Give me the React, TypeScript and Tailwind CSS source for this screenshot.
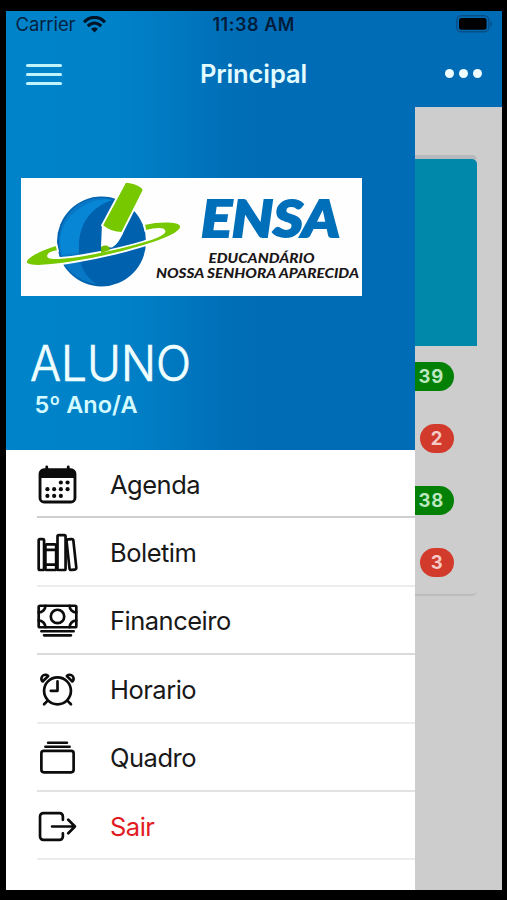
import type { IconType } from 'react-icons';
import { IoAlarmOutline, IoAlbumsOutline, IoCashOutline, IoExitOutline, IoLibraryOutline } from 'react-icons/io5';

const calendarDots = [
  [296, 232],
  [376, 232],
  [136, 312],
  [216, 312],
  [296, 312],
  [376, 312],
  [136, 392],
  [216, 392],
  [296, 392],
];

function CalendarIcon({ className }: { className?: string }) {
  return (
    <svg className={className} viewBox="0 0 512 512">
      <g fill="none" stroke="currentColor" strokeWidth="34">
        <rect x="48" y="80" width="416" height="384" rx="48" />
        <path d="M128 48v32M384 48v32" strokeLinecap="round" />
      </g>
      <path d="M48 178v-50a48 48 0 0148-48h320a48 48 0 0148 48v50z" fill="currentColor" />
      {calendarDots.map(([cx, cy]) => (
        <circle key={`${cx}-${cy}`} cx={cx} cy={cy} r="25" fill="currentColor" />
      ))}
    </svg>
  );
}

const menuItems: { label: string; icon: IconType | typeof CalendarIcon; line: string; danger?: boolean }[] = [
  { label: 'Agenda', icon: CalendarIcon, line: 'border-[#cfcfcf]' },
  { label: 'Boletim', icon: IoLibraryOutline, line: 'border-[#ececec]' },
  { label: 'Financeiro', icon: IoCashOutline, line: 'border-[#dadada]' },
  { label: 'Horario', icon: IoAlarmOutline, line: 'border-[#ececec]' },
  { label: 'Quadro', icon: IoAlbumsOutline, line: 'border-[#e2e2e2]' },
  { label: 'Sair', icon: IoExitOutline, line: 'border-[#ececec]', danger: true },
];

const badges = [
  { value: '39', good: true },
  { value: '2', good: false },
  { value: '38', good: true },
  { value: '3', good: false },
];

const gradient =
  'bg-[linear-gradient(90deg,#0083c9_0px,#0082c8_110px,#0079c1_165px,#006fb8_220px,#006cb6_260px)]';

function StatusBar() {
  return (
    <div className="grid h-[28px] grid-cols-3 items-center px-[10px] text-[#04213f]">
      <div className="flex items-center gap-[8px]">
        <span className="text-[18.5px] tracking-[-0.1px]">Carrier</span>
        <svg className="-mt-[1px]" width="23" height="17" viewBox="0 0 23 17" fill="none" stroke="#001226" strokeWidth="3.2">
          <path d="M1 6.2C7-.1 16-.1 22 6.2" />
          <path d="M4.8 10.2C9 6 14 6 18.2 10.2" />
          <path d="M11.5 16.5 8 12.8c2-1.9 5-1.9 7 0z" fill="#001226" stroke="none" />
        </svg>
      </div>
      <span className="-mt-[2px] text-center text-[18px] font-semibold tracking-[0.55px] whitespace-nowrap text-[#001c3a]">
        11:38 AM
      </span>
      <svg className="-mt-[2px] -mr-[1px] justify-self-end" width="37" height="18" viewBox="0 0 37 18">
        <rect x="0.8" y="0.8" width="32" height="16" rx="4.5" fill="none" stroke="#064e86" strokeWidth="1.4" />
        <rect x="3" y="3" width="27.6" height="11.8" rx="2.5" fill="#000" />
        <path d="M34.5 6c2 1 2 5 0 6z" fill="#064e86" />
      </svg>
    </div>
  );
}

function Header() {
  return (
    <header className={`h-[96px] shrink-0 ${gradient}`}>
      <StatusBar />
      <div className="grid h-[69px] grid-cols-3 items-center pr-[20.5px] pl-[20px]">
        <button className="flex w-[36px] flex-col gap-[6px] pt-[1px]" aria-label="Menu">
          <span className="h-[3px] rounded-full bg-[#bff4fc]" />
          <span className="h-[3px] rounded-full bg-[#bff4fc]" />
          <span className="h-[3px] rounded-full bg-[#bff4fc]" />
        </button>
        <h1 className="pt-[1px] text-center text-[25.5px] font-semibold tracking-[-0.1px] text-[#e2fbff]">Principal</h1>
        <button className="flex gap-[5px] justify-self-end" aria-label="Opções">
          <span className="size-[9px] rounded-full bg-[#effdff]" />
          <span className="size-[9px] rounded-full bg-[#effdff]" />
          <span className="size-[9px] rounded-full bg-[#effdff]" />
        </button>
      </div>
    </header>
  );
}

function Logo() {
  return (
    <svg className="-ml-[0.5px] block bg-[#fefefe]" width="341" height="118" viewBox="0 0 341 118">
      <ellipse cx="80.5" cy="63.5" rx="44.5" ry="45" fill="#0062ae" />
      <path d="M80 20C56 20 38 40 38 64s17 40 38 42c-14-8-20-24-18-42C60 46 68 30 91 22c-3-1.4-7-2-11-2z" fill="#0877c5" />
      <path d="M86 21C62 22 40 40 39 64c0 5 1 9 2 13l17-2C56 50 66 31 91 22z" fill="#0786d6" />
      {/* ring */}
      <path
        fillRule="evenodd"
        d="M35.5 67C19 72 5 79 5 84c0 6 25 4 48 0 43-7 107-24 107-35.5 0-6-20-6-37-2.500l1.500 7c10-2.500 19-3 19 .5 0 5-34 15-72 22C47 80 27 82 27 78c0-2 4-4 10-5z"
        fill="#78c800"
        stroke="#fff"
        strokeWidth="1.8"
      />
      {/* pencil */}
      <path d="M81 46 80 69l11 .5c5-3 8-8 11-14z" fill="#fefefe" />
      <path d="M81 47.5 104 4.500c1-2 18 2 18.500 8L101 55c-7 0-15-3-20-7.500z" fill="#78c800" stroke="#fff" strokeWidth="1.8" />
      <path d="M80 69c5-3 9-1 9 3l-9 3z" fill="#70bd00" />
      <text
        x="180"
        y="58.5"
        textLength="139"
        lengthAdjust="spacingAndGlyphs"
        className="fill-[#006fba] stroke-[#006fba] stroke-2 font-['Lato',sans-serif] text-[52px] font-black italic"
      >
        ENSA
      </text>
      <text
        x="187.5"
        y="84.500"
        textLength="106"
        lengthAdjust="spacingAndGlyphs"
        className="fill-[#1b1718] font-['Lato',sans-serif] text-[13.2px] font-black italic"
      >
        EDUCANDÁRIO
      </text>
      <text
        x="135"
        y="100"
        textLength="203"
        lengthAdjust="spacingAndGlyphs"
        className="fill-[#1b1718] font-['Lato',sans-serif] text-[13.2px] font-black italic"
      >
        NOSSA SENHORA APARECIDA
      </text>
    </svg>
  );
}

function Drawer() {
  return (
    <aside className="w-[409.5px] shrink-0 bg-white">
      <div className={`h-[343px] pt-[70.5px] pl-[16px] ${gradient}`}>
        <Logo />
        <div className="pt-[41px] pl-[8px] text-[#effeff]">
          <svg className="block overflow-visible" width="161" height="52">
            <text
              x="0"
              y="44"
              textLength="161"
              lengthAdjust="spacingAndGlyphs"
              className="fill-current stroke-current stroke-[0.7] text-[49px] font-light"
            >
              ALUNO
            </text>
          </svg>
          <p className="pt-[2px] pl-[5px] text-[23.5px] leading-[28px] font-semibold text-[#d2faff]">5º Ano/A</p>
        </div>
      </div>
      <nav className="pl-[31px]">
        {menuItems.map(({ label, icon: Icon, line, danger }) => (
          <a key={label} className={`flex h-[68.4px] items-center border-b-2 pt-[2px] ${line}`}>
            <Icon className="-ml-[0.5px] size-[43px] text-[#0c0c0c]" />
            <span
              className={`pt-[1px] pl-[31px] text-[25.5px] tracking-[-0.5px] ${danger ? 'text-[#e21b22]' : 'text-[#181818]'}`}
            >
              {label}
            </span>
          </a>
        ))}
      </nav>
    </aside>
  );
}

function Summary() {
  return (
    <main className="min-w-0 flex-1 bg-[#cdcdcd] pt-[47.5px] pr-[25px]">
      <div className="h-[441px] rounded-r-[5px] border-t-4 border-b-2 border-t-[#b7b8bd] border-b-[#bcbcbc]">
        <div className="h-[187px] rounded-tr-[5px] bg-[#0088aa]" />
        <div className="flex flex-col items-end gap-[33px] pt-[16px] pr-[23px]">
          {badges.map(({ value, good }) => (
            <span
              key={value}
              className={`flex h-[29px] items-center rounded-full pt-[1px] text-[18.5px] font-bold tracking-[0.8px] ${
                good
                  ? 'w-[39px] justify-end rounded-l-none bg-[#038006] pr-[10px] text-[#bce8c0]'
                  : 'w-[34px] justify-center bg-[#d23a2c] text-[#f4cbc7]'
              }`}
            >
              {value}
            </span>
          ))}
        </div>
      </div>
    </main>
  );
}

export default function App() {
  return (
    <div className="h-[900px] w-[507px] overflow-hidden bg-black pt-[11px] pr-[5px] pl-[5.5px] font-['Inter',sans-serif]">
      <div className="flex h-[878.5px] flex-col overflow-hidden">
        <Header />
        <div className="flex min-h-0 flex-1">
          <Drawer />
          <Summary />
        </div>
      </div>
    </div>
  );
}
